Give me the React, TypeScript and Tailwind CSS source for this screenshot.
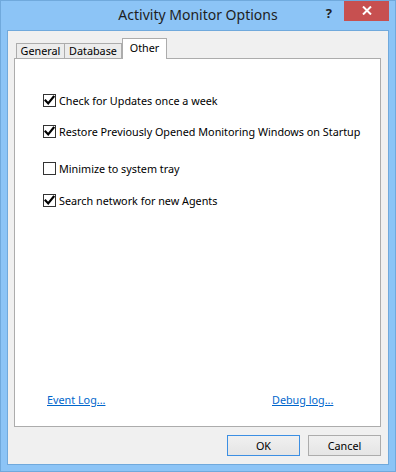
import React from "react";

function Check() {
  return (
    <svg width="11" height="11" viewBox="0 0 11 11" className="block">
      <path d="M1.5 5.5 L4.2 8.4 L9.5 1.8" fill="none" stroke="#000" strokeWidth="2.2" strokeLinecap="square" />
    </svg>
  );
}

function CheckRow({ label, checked, className }: { label: string; checked: boolean; className: string }) {
  return (
    <div className={`flex items-center h-[13px] ${className}`}>
      <div className="w-[13px] h-[13px] border border-[#333] bg-white flex items-center justify-center shrink-0">
        {checked ? <Check /> : null}
      </div>
      <span className="ml-[3px] leading-[13px] whitespace-nowrap">{label}</span>
    </div>
  );
}

export default function App() {
  return (
    <div className="w-[396px] h-[472px] bg-[#8cc4f6] border border-[#70a9dc] flex flex-col font-['Noto_Sans',sans-serif] text-[10.8px] text-black overflow-hidden">
      <div className="h-[29px] shrink-0 grid grid-cols-[1fr_auto_1fr] items-start">
        <div />
        <div className="pt-[4px] text-[14px] leading-[20px] text-[#1e1e1e] whitespace-nowrap">Activity Monitor Options</div>
        <div className="flex justify-end items-start">
          <span className="mt-[4px] mr-[12px] text-[13px] leading-[16px] font-bold text-[#222]">?</span>
          <div className="mt-[-1px] mr-[6px] w-[45px] h-[21px] bg-[#c75050] flex items-center justify-center">
            <svg width="10" height="9" viewBox="0 0 10 9">
              <path d="M1 0.5 L9 8.5 M9 0.5 L1 8.5" stroke="#fff" strokeWidth="2" />
            </svg>
          </div>
        </div>
      </div>
      <div className="mx-[6px] mb-[6px] flex-1 border border-[#70a9dc] bg-[#f0f0f0] flex flex-col">
        <div className="pt-[7px] pl-[8px] flex items-end relative z-10 mb-[-1px] shrink-0">
          <div className="w-[49px] h-[16px] border border-[#acacac] bg-[#ececec] flex items-center justify-center leading-[14px]">General</div>
          <div className="ml-[-1px] w-[58px] h-[16px] border border-[#acacac] bg-[#ececec] flex items-center justify-center leading-[14px]">Database</div>
          <div className="w-[45px] h-[21px] border border-b-0 border-[#acacac] bg-white flex justify-center pt-[2px] leading-[14px]">Other</div>
        </div>
        <div className="ml-[6px] mr-[7px] flex-1 border border-[#acacac] bg-white flex flex-col pl-[28px]">
          <CheckRow className="mt-[35px]" checked label="Check for Updates once a week" />
          <CheckRow className="mt-[18px]" checked label="Restore Previously Opened Monitoring Windows on Startup" />
          <CheckRow className="mt-[24px]" checked={false} label="Minimize to system tray" />
          <CheckRow className="mt-[19px]" checked label="Search network for new Agents" />
          <div className="mt-auto mb-[18px] ml-[4px] flex leading-[16px]">
            <span className="w-[225px] text-[#0066cc] underline">Event Log...</span>
            <span className="text-[#0066cc] underline">Debug log...</span>
          </div>
        </div>
        <div className="mt-[8px] mb-[8px] mr-[7px] flex justify-end gap-[8px] shrink-0">
          <div className="w-[73px] h-[21px] border border-[#3c8fe3] bg-gradient-to-b from-[#f0f0f0] to-[#e5e5e5] flex items-center justify-center leading-[14px]">OK</div>
          <div className="w-[73px] h-[21px] border border-[#acacac] bg-gradient-to-b from-[#f0f0f0] to-[#e5e5e5] flex items-center justify-center leading-[14px]">Cancel</div>
        </div>
      </div>
    </div>
  );
}
